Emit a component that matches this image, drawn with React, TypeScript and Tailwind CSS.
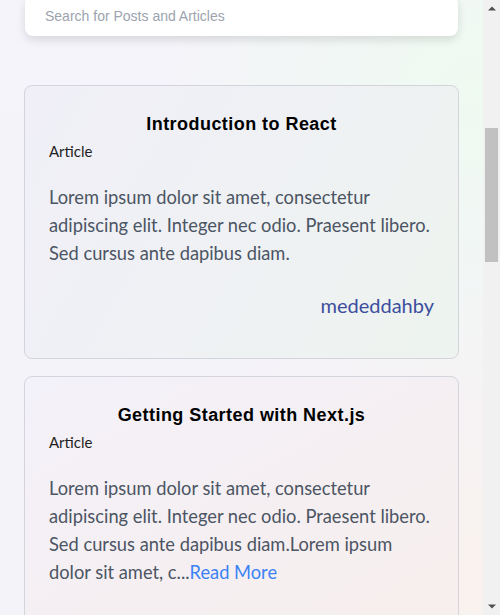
import { useLayoutEffect, useRef } from 'react';

interface Post {
  id: number;
  title: string;
  type: string;
  body: string;
  author?: string;
  truncated?: boolean;
}

const lorem =
  'Lorem ipsum dolor sit amet, consectetur adipiscing elit. Integer nec odio. Praesent libero. Sed cursus ante dapibus diam.';

const posts: Post[] = [
  { id: 1, title: 'Introduction to React', type: 'Article', body: lorem, author: 'mededdahby' },
  { id: 2, title: 'Getting Started with Next.js', type: 'Article', body: lorem + 'Lorem ipsum dolor sit amet, c...', truncated: true },
  { id: 3, title: 'Styling with Tailwind CSS', type: 'Post', body: lorem, author: 'mededdahby' },
  { id: 4, title: 'Understanding TypeScript', type: 'Article', body: lorem, author: 'mededdahby' },
  { id: 5, title: 'State Management Basics', type: 'Post', body: lorem, author: 'mededdahby' },
  { id: 6, title: 'Building REST APIs', type: 'Article', body: lorem, author: 'mededdahby' },
  { id: 7, title: 'Deploying Your App', type: 'Post', body: lorem, author: 'mededdahby' },
];

function PostCard({ post, tone }: { post: Post; tone: number }) {
  const bg =
    tone === 0
      ? 'bg-[linear-gradient(120deg,#f0eff7_0%,#eff1f4_50%,#edf3ee_100%)]'
      : 'bg-[linear-gradient(150deg,#f3f1f9_0%,#f5eff2_55%,#f7efed_100%)]';
  return (
    <div className={`rounded-lg border border-[#d4d4dc] px-6 pt-6 pb-[39px] ${bg}`}>
      <h2 className="text-center text-lg leading-7 font-bold tracking-wide text-black font-['Liberation_Sans',sans-serif]">
        {post.title}
      </h2>
      <p className="text-[15px] leading-[26px] text-[#1f1f1f]">{post.type}</p>
      <p className="mt-[19px] text-[18.3px] leading-7 text-[#4b5563]">
        {post.truncated ? (
          <>
            {post.body}
            <span className="text-[#3b82f6]">Read More</span>
          </>
        ) : (
          post.body
        )}
      </p>
      {post.author && (
        <p className="mt-6 text-right text-xl leading-7 text-[#3c4e9e]">{post.author}</p>
      )}
    </div>
  );
}

// fake classic scrollbar, the real one is hidden in headless
function ScrollBar() {
  return (
    <div className="flex w-[17px] shrink-0 flex-col bg-[#f1f1f1]">
      <div className="flex h-[17px] items-center justify-center">
        <svg width="8" height="5" viewBox="0 0 8 5">
          <path d="M0 4.5 L4 0.5 L8 4.5 Z" fill="#505050" />
        </svg>
      </div>
      <div className="mx-[2px] mt-[111px] h-[134px] bg-[#c1c1c1]" />
      <div className="flex-1" />
      <div className="flex h-[17px] items-center justify-center">
        <svg width="8" height="5" viewBox="0 0 8 5">
          <path d="M0 0.5 L4 4.5 L8 0.5 Z" fill="#505050" />
        </svg>
      </div>
    </div>
  );
}

export default function App() {
  const scrollRef = useRef<HTMLDivElement>(null);
  const searchRef = useRef<HTMLDivElement>(null);

  useLayoutEffect(() => {
    const box = scrollRef.current;
    const el = searchRef.current;
    if (!box || !el) return;
    box.scrollTop = el.offsetTop + el.offsetHeight - 36;
  }, []);

  return (
    <div className="flex h-screen bg-[radial-gradient(circle_at_95%_15%,#effaf1_0%,transparent_45%),radial-gradient(circle_at_95%_95%,#f9f2ee_0%,transparent_45%),linear-gradient(180deg,#f5f4fa,#f4f3fa)] font-['Lato','Noto_Sans',sans-serif]">
      <div
        ref={scrollRef}
        className="relative flex-1 overflow-y-scroll [scrollbar-width:none]"
      >
        <nav className="flex items-center justify-between px-6 h-16 bg-white/70 shadow-sm">
          <span className="text-xl font-bold text-[#3c4e9e]">DevBlog</span>
          <span className="text-sm text-gray-600">Sign in</span>
        </nav>
        <header className="flex h-[442px] flex-col items-center justify-center px-6 text-center">
          <h1 className="text-4xl font-bold text-gray-800">Posts and Articles</h1>
          <p className="mt-4 text-lg text-gray-600">
            Read the latest posts and articles written by the community.
          </p>
          <p className="mt-4 text-base text-gray-500">
            Browse by topic, find something new and share what you learn.
          </p>
        </header>

        <main className="px-6 pb-[76px]">
          <div
            ref={searchRef}
            className="mx-px rounded-lg bg-white shadow-[0_4px_10px_rgba(0,0,0,0.12)]"
          >
            <input
              className="w-full bg-transparent px-5 py-[10px] text-sm leading-5 text-gray-700 outline-none placeholder:text-[#9ca3af] font-['Liberation_Sans',sans-serif]"
              placeholder="Search for Posts and Articles"
            />
          </div>

          <div className="mt-[49px] flex flex-col gap-[17px]">
            {posts.map((post, i) => (
              <PostCard key={post.id} post={post} tone={i % 2} />
            ))}
          </div>
        </main>
      </div>
      <ScrollBar />
    </div>
  );
}
